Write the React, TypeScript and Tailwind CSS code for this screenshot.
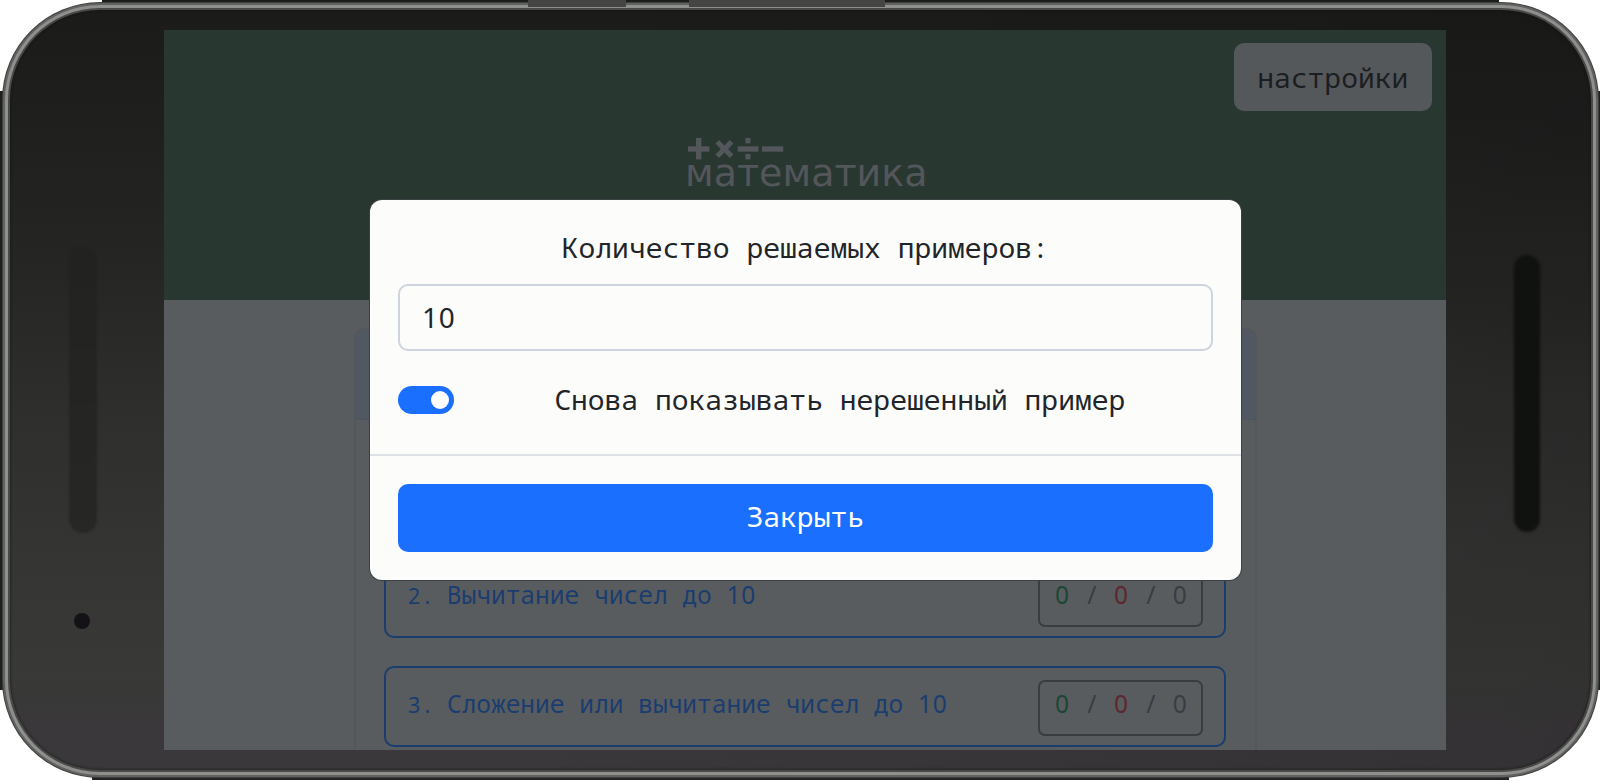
const Symbols = () => (
  <svg className="ml-[2.5px] block h-[22px] w-[96px] fill-[#53565a]" viewBox="688 138 96 22">
    <rect x="688" y="146.3" width="21.4" height="5.4" />
    <rect x="696" y="138" width="5.4" height="21.4" />
    <path d="M715.5 143.6 719 140l5.4 5.4 5.4-5.4 3.6 3.6-5.3 5.4 5.3 5.4-3.6 3.6-5.4-5.4-5.4 5.4-3.5-3.6 5.3-5.4z" />
    <rect x="737.7" y="146.3" width="20.8" height="5.4" />
    <rect x="745.4" y="138" width="5" height="5.4" />
    <rect x="745.4" y="154" width="5" height="5.4" />
    <rect x="762" y="146.3" width="21.2" height="5.4" />
  </svg>
);

const Num = ({ value, className = "" }: { value: string; className?: string }) => (
  <span className={`font-['Noto_Sans',sans-serif] tracking-[0.028em] ${className}`}>{value}</span>
);

const Task = ({ n, title, limit }: { n: string; title: string; limit: string }) => (
  <div className="flex h-[81px] shrink-0 items-start justify-between rounded-[10px] border-2 border-[#1a3d70] pl-[22px] pr-[21px] pt-3 text-[24.55px] leading-[36.75px] text-[#1a3d70]">
    <div className="whitespace-pre pt-[6px]">
      <span className="text-[21.5px]"><Num value={n} />. </span>
      {title}{" "}
      <Num value={limit} />
    </div>
    <div className="h-[56px] w-[165px] whitespace-pre rounded-[7px] border-2 border-[#383d42] pl-[15px] pt-[4px] text-[#383d42]">
      <Num value="0" className="text-[#1c4634]" /> / <Num value="0" className="text-[#5c272d]" /> / <Num value="0" />
    </div>
  </div>
);

export default function App() {
  return (
    <div className="relative h-[780px] w-[1600px] overflow-hidden bg-white font-['Noto_Sans_Mono','Liberation_Mono',monospace] font-[370]">
      <div className="absolute left-[102px] top-0 h-[3px] w-[1397px] bg-[#1c1e1b]" />
      <div className="absolute bottom-0 left-[92px] h-[3px] w-[1417px] bg-[#232224]" />
      <div className="absolute left-0 top-[91px] h-[599px] w-[1600px] bg-[#1e201e]" />
      <div className="relative ml-[2px] mt-[2px] h-[776px] w-[1597px] rounded-[98px] bg-[#3e403e] p-[1px]">
        <div className="h-full w-full rounded-[97px] bg-[#60625f] p-[2px]">
          <div className="h-full w-full rounded-[95px] bg-[#8f908d] p-[3px]">
            <div className="h-full w-full rounded-[92px] bg-[#484a47] p-[2px]">
              <div className="flex h-full w-full rounded-[90px] bg-[linear-gradient(90deg,transparent_30%,rgba(0,0,0,0.12)),linear-gradient(180deg,#1b1b19_0%,#1f201e_15%,#262624_35%,#2d2e2c_50%,#343533_70%,#383936_85%,#3b383b_96%)] pl-[154px] pt-[19.5px] shadow-[inset_0_0_3px_#111]">
                <div className="flex h-[720.5px] w-[1282px] flex-col overflow-hidden bg-[#595c5e]">
                  <header className="flex h-[270.5px] shrink-0 flex-col bg-[#293731]">
                    <button className="mr-[14px] mt-[13.5px] h-[68px] w-[198.5px] self-end rounded-[10px] bg-[#55585b] text-[28px] text-[#1b1e21]">настройки</button>
                    <div className="mx-auto mt-[27px] w-[242px] pl-[1px] text-[38px] leading-[38px] text-[#53565a]">
                      <Symbols />
                      <div className="-mt-[6px] font-['DejaVu_Sans',sans-serif] font-normal">математика</div>
                    </div>
                  </header>
                  <main className="ml-[190px] mt-[28px] flex w-[903px] flex-1 flex-col rounded-t-[10px] border-2 border-b-0 border-[#54575a]">
                    <div className="h-[90px] shrink-0 rounded-t-[8px] border-b-2 border-[#4e5760] bg-[#515861]" />
                    <div className="flex flex-col gap-7 pl-7 pr-[29px] pt-7">
                      <Task n="1" title="Сложение чисел до" limit="10" />
                      <Task n="2" title="Вычитание чисел до" limit="10" />
                      <Task n="3" title="Сложение или вычитание чисел до" limit="10" />
                    </div>
                  </main>
                </div>
              </div>
            </div>
          </div>
        </div>
      </div>
      <div className="absolute left-[528px] top-0 h-[7px] w-[98px] bg-[#454643]" />
      <div className="absolute left-[689px] top-0 h-[7px] w-[196px] bg-[#454643]" />
      <div className="absolute left-[69px] top-[246px] h-[287px] w-[28px] rounded-[14px] bg-linear-to-b from-[#222321] to-[#272826] blur-[1px]" />
      <div className="absolute left-[1514px] top-[255px] h-[277px] w-[26px] rounded-[13px] bg-[#10120f] blur-[1.5px]" />
      <div className="absolute left-[74px] top-[613px] h-4 w-4 rounded-full bg-[#141217]" />

      <div role="dialog" className="absolute left-[370px] top-[199.5px] flex h-[380px] w-[870.5px] flex-col rounded-[12px] bg-[#fcfdfb] px-7 pt-[26.5px] text-[28px] leading-[42px] text-[#212529] shadow-[0_0_0_1px_#3b4142]">
        <label className="text-center">Количество решаемых примеров:</label>
        <div className="mt-[16px] h-[67px] shrink-0 rounded-[10px] border-2 border-[#ced4de] pl-[22px] pt-[10px]">
          <Num value="10" />
        </div>
        <div className="mt-[28px] flex h-[42px] shrink-0 items-center">
          <div className="flex h-7 w-14 items-center justify-end rounded-full bg-[#1a6fff] pr-[5px]">
            <div className="size-[18px] rounded-full bg-white" />
          </div>
          <div className="-mt-[3px] flex-1 pl-[13px] text-center">Снова показывать нерешенный пример</div>
        </div>
        <div className="-mx-7 mt-[33px] h-[2px] shrink-0 bg-[#dee1e6]" />
        <button className="mt-[28px] h-[67.5px] shrink-0 rounded-[10px] bg-[#1a6fff] pb-[4px] text-white">Закрыть</button>
      </div>
    </div>
  );
}
